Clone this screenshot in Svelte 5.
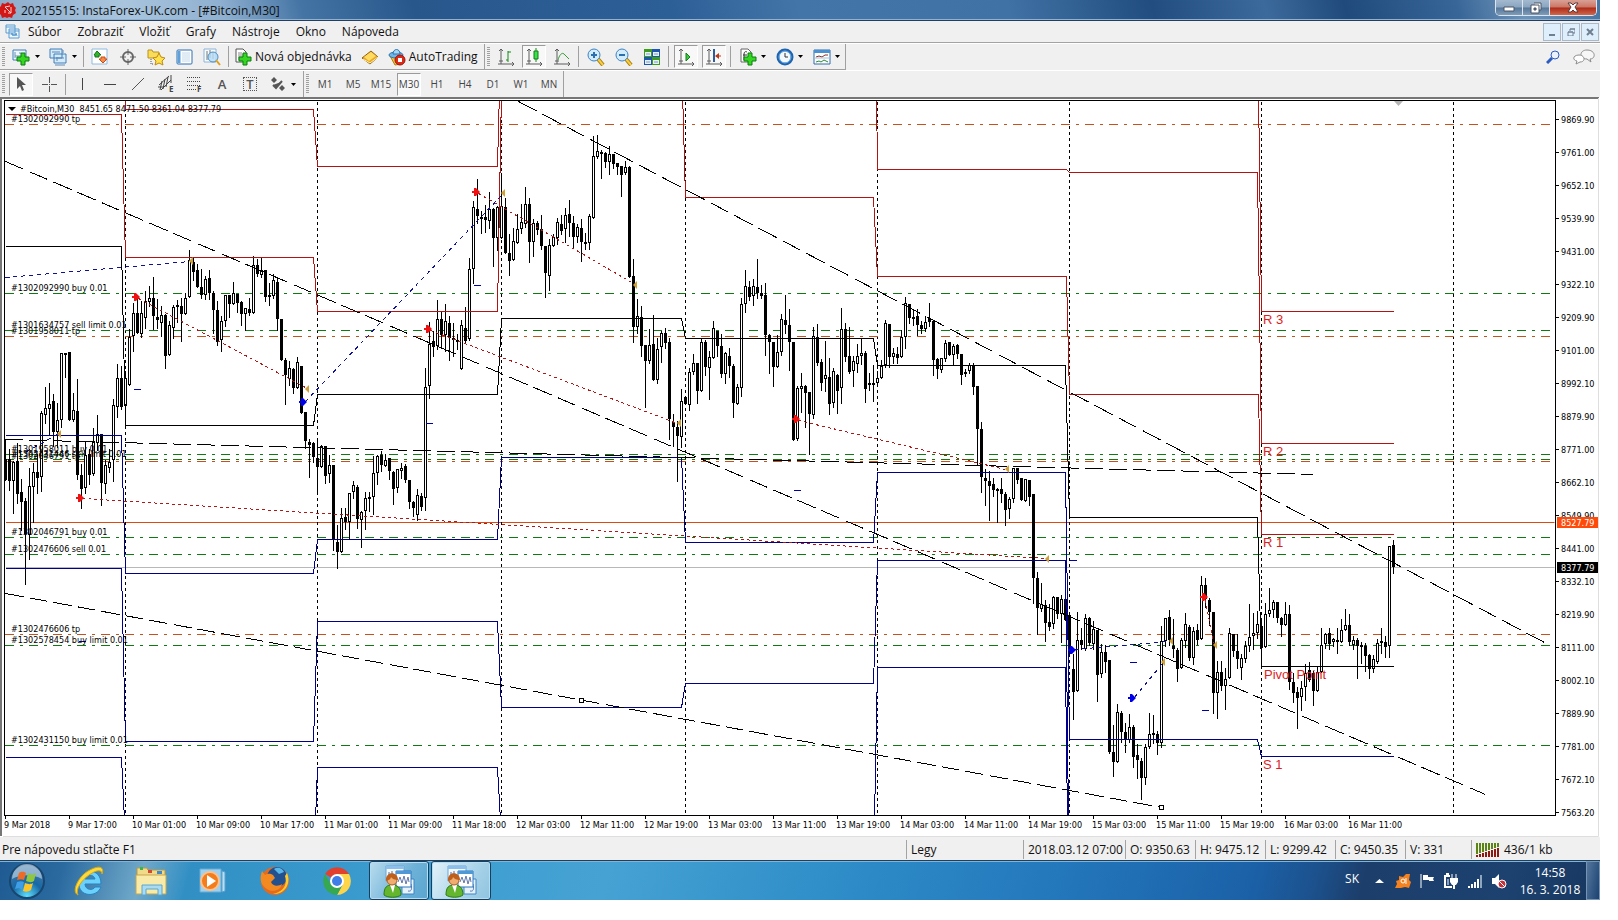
<script lang="ts">
  /**
   * Trading terminal window: title bar, menu, two toolbars, one candlestick
   * chart with pivots, orders and trend lines, the status bar and the
   * desktop taskbar below it.
   */

  const menu = ['Súbor', 'Zobraziť', 'Vložiť', 'Grafy', 'Nástroje', 'Okno', 'Nápoveda'];
  const periods = ['M1', 'M5', 'M15', 'M30', 'H1', 'H4', 'D1', 'W1', 'MN'];
  let period = $state('M30');

  // Chart space: one bar every 4 units, a price step every 33.
  const LEFT = 5;
  const RIGHT = 1555;
  const TOP = 100;
  const BOTTOM = 815;

  // Direction (u/d), then high, body top, body bottom, low.
  const bars = `
    d438,459,480,480 d448,459,481,490 u460,462,481,513 d442,461,494,503 d478,492,502,530 d497,501,534,584
    u467,486,535,559 u462,472,487,522 d453,472,478,493 u410,413,477,491 u386,408,415,423 u382,404,409,435
    d393,401,432,446 u402,420,432,447 u353,353,420,427 d353,353,353,377 d351,352,420,420 u392,410,420,421
    d378,411,475,479 d463,475,489,508 u440,455,488,493 d448,454,475,484 u427,442,474,475 u414,434,443,450
    d433,434,483,505 u459,465,484,493 u448,462,468,472 u398,405,460,481 u363,378,407,417 d365,378,407,409
    u370,378,406,417 u328,337,385,385 u302,313,336,351 d297,313,333,333 u300,313,334,337 u290,301,318,328
    u285,298,302,306 d276,298,316,329 d298,317,320,328 u305,315,323,336 d313,315,356,368 u320,325,355,355
    u304,307,328,338 u299,305,307,322 d297,306,314,341 u292,298,314,314 u249,260,297,297 d257,262,272,280
    d263,270,287,287 d268,287,295,298 u275,279,295,299 d269,278,293,299 d290,293,310,333 d300,310,342,345
    u315,321,340,351 u294,295,321,326 d294,295,304,317 u281,293,304,304 d293,294,303,312 d300,302,314,325
    u307,308,314,330 d297,309,313,315 u255,265,313,313 d258,265,274,276 u256,270,275,277 d270,270,297,301
    d282,295,297,305 u273,280,296,298 d277,282,319,330 d319,319,360,360 d357,360,375,404 u360,368,379,385
    d367,369,388,393 u356,362,388,388 d365,366,413,413 d412,412,441,448 d438,442,445,477 d441,443,457,462
    d440,458,467,493 u444,446,467,467 d446,446,476,483 u454,465,474,482 d464,465,540,550 d524,542,552,568
    u507,518,552,552 d507,517,522,529 u493,493,522,539 u480,485,492,498 d484,487,519,528 u510,512,520,547
    u491,498,511,529 d491,497,498,511 u455,473,497,514 u454,456,473,484 d450,455,465,471 u453,460,466,466
    d458,458,471,479 d470,472,489,504 u468,469,488,492 u462,468,471,478 d463,466,480,482 d479,480,502,508
    d500,502,508,516 u488,495,515,520 d492,496,507,510 u367,387,498,510 u321,344,386,398 d330,341,347,356
    u299,319,346,349 d310,319,335,347 u303,321,335,351 d315,323,338,360 d322,338,340,356 d333,340,341,349
    u319,325,369,369 d306,328,341,343 u257,269,339,340 u200,207,269,283 d178,209,216,223 d210,217,218,233
    d204,217,220,232 u191,209,221,228 d207,209,238,266 u205,207,238,250 u172,206,238,238 d197,207,253,253
    d233,253,261,275 u227,241,260,260 u213,229,243,243 u203,222,229,233 u186,204,224,227 d197,204,242,262
    u218,223,242,256 d220,223,230,234 d214,229,246,249 d245,246,273,297 u238,245,276,290 u233,237,246,246
    u217,222,238,244 d214,224,231,234 u207,215,229,242 d199,214,223,236 d215,223,237,247 u223,227,237,242
    d218,228,242,261 d232,242,243,249 u213,216,243,249 u135,156,218,218 u134,151,157,158 d149,152,153,178
    d151,153,162,167 u145,154,162,174 d153,154,164,168 d162,163,167,174 d165,166,175,196 u160,167,173,174
    d165,167,277,277 d258,276,327,342 u298,316,327,333 d305,317,346,356 d344,345,361,407 u328,345,361,363
    d314,344,380,380 u337,349,380,383 u330,333,347,362 d327,333,343,348 d337,342,419,439 d413,422,427,446
    d420,427,436,481 u388,401,437,447 d395,397,404,404 u367,372,405,410 u353,363,372,374 d362,363,391,403
    u337,342,391,391 d339,342,367,375 u350,357,368,399 u320,328,358,358 d330,331,346,356 d333,346,374,377
    u351,353,374,383 d347,356,366,377 d363,366,403,417 u383,387,404,404 u297,304,388,396 u269,286,304,312
    d280,287,297,300 u278,286,296,305 d258,287,293,298 d284,293,296,298 d282,295,335,355 d333,335,342,373
    d341,342,367,386 u334,352,367,367 u313,319,352,355 d294,320,325,333 d308,325,342,370 d342,342,440,440
    u385,388,439,440 u372,386,389,412 d384,386,393,427 d391,392,414,454 u326,336,415,418 d323,337,363,365
    d358,362,383,390 u340,375,379,391 d357,377,404,414 u367,371,403,407 d373,375,391,413 u307,329,388,403
    d322,329,357,361 d326,356,372,373 u355,361,371,386 u343,356,364,372 u338,353,356,364 d350,353,389,402
    u372,383,384,390 d364,383,384,401 u370,378,383,383 u359,366,378,378 u319,323,365,367 d323,324,357,367
    u347,353,357,363 d346,354,358,363 u329,337,357,357 u296,303,337,348 d303,304,318,323 u308,317,319,325
    d308,316,325,335 d320,325,329,333 u315,322,329,331 d302,318,322,326 d320,321,360,375 d357,359,369,378
    u357,358,370,372 u339,343,359,361 d341,342,355,355 u343,346,355,365 d343,345,354,358 d354,354,375,384
    d368,372,373,376 u362,365,371,373 d362,365,387,394 d385,386,429,465 d421,429,477,492 d468,478,481,505
    d470,481,486,520 d477,484,490,496 d487,489,490,522 d477,489,494,502 d491,494,510,525 u496,499,509,518
    u467,468,499,502 d467,468,480,483 d478,478,500,500 u479,479,501,501 d479,480,497,505 d493,494,578,603
    d571,578,608,634 u582,604,609,611 d599,605,623,641 d603,622,627,630 u595,597,624,628 d596,597,614,618
    u594,599,614,642 d598,599,620,620 d615,615,653,653 d653,669,692,719 u611,640,691,691 d627,640,645,649
    u613,618,649,650 d616,618,643,645 u620,629,644,649 d629,630,675,701 u643,652,674,677 d644,652,662,672
    d659,660,752,753 d724,752,762,776 u703,712,762,762 d710,713,732,742 d722,732,740,752 u713,727,740,742
    d724,727,757,767 d743,755,760,778 d757,761,778,799 u743,747,778,784 u712,734,747,748 d714,733,735,743
    d730,734,743,754 u625,641,743,747 u617,618,641,646 d609,617,640,645 d618,646,649,657 d647,650,669,681
    u637,640,668,668 u612,624,641,647 d624,627,658,660 u626,631,658,664 d623,630,640,644 u575,585,639,639
    d577,585,599,607 d597,600,612,625 d612,612,693,713 u660,672,693,718 d660,672,686,690 u667,679,686,709
    u627,633,678,678 d633,634,651,656 d633,651,659,668 u653,658,668,679 u640,646,659,662 u603,637,646,651
    u612,633,636,649 u610,624,633,638 d620,626,648,648 u602,614,647,647 u587,610,614,616 u599,602,610,617
    d601,602,618,622 d616,618,625,636 u601,614,625,625 d604,614,682,689 d672,682,693,702 d686,692,698,728
    u680,688,697,710 u663,673,687,700 d661,670,680,681 d670,673,691,705 u665,672,691,691 u627,645,672,672
    u632,634,644,648 d627,633,644,649 u637,639,642,646 d627,640,642,653 u618,630,642,642 u608,625,630,630
    d613,625,642,645 u635,640,645,649 d637,640,646,678 d641,645,646,663 d642,646,656,671 d653,655,669,678
    u654,659,669,672 u638,643,662,663 d627,641,643,653 d635,642,647,657 u545,546,646,657 d539,545,567,573`
    .trim()
    .split(/\s+/)
    .map((bar, i) => {
      const [high, top, bottom, low] = bar.slice(1).split(',').map(Number);
      return { x: LEFT + i * 4, up: bar[0] === 'u', high, top, bottom, low };
    });

  const dayBreaks = [125, 317, 501, 685, 877, 1069, 1261, 1453];

  const pivots = [
    { color: '#b51212', d: 'M5 114H121L125 257H313L317 311H497L501 90' },
    { color: '#b51212', d: 'M125 90V109H313L317 166H497L499 90' },
    { color: '#b51212', d: 'M682 90L685 197H873L877 276H1066L1069 394H1258L1261 534H1393' },
    { color: '#b51212', d: 'M876 90L877 169H1066L1069 172H1257L1261 443H1393' },
    { color: '#b51212', d: 'M1258 90L1261 311H1393' },
    { color: '#000', d: 'M5 246H121L125 425H313L317 394H497L501 318H681L685 338H873L877 365H1065L1069 517H1257L1261 666H1393' },
    { color: '#00008b', d: 'M5 435H121L125 573H313L317 539H497L501 457H681L685 542H873L877 472H1065L1069 739H1257L1261 756H1393' },
    { color: '#00008b', d: 'M5 568H121L125 741H313L317 621H497L501 707H681L685 683H873L877 560H1065L1068 820' },
    { color: '#00008b', d: 'M5 757H121L124 820M315 820L317 767H497L500 820M874 820L877 667H1065L1067 820' },
  ];

  const pivotLabels = [
    { text: 'R 3', x: 1263, y: 324 },
    { text: 'R 2', x: 1263, y: 456 },
    { text: 'R 1', x: 1263, y: 547 },
    { text: 'Pivot Point', x: 1264, y: 679 },
    { text: 'S 1', x: 1263, y: 769 },
  ];

  const orders = [
    { y: 124, tp: true, text: '#1302092990 tp' },
    { y: 293, tp: false, text: '#1302092990 buy 0.01' },
    { y: 330, tp: false, text: '#1301634757 sell limit 0.01' },
    { y: 336, tp: true, text: '#1301958011 tp' },
    { y: 454, tp: false, text: '#1301958011 buy 0.01' },
    { y: 459, tp: false, text: '#1302431446 sell limit 0.01' },
    { y: 461, tp: true, text: '#1302046791 tp' },
    { y: 537, tp: false, text: '#1302046791 buy 0.01' },
    { y: 554, tp: false, text: '#1302476606 sell 0.01' },
    { y: 634, tp: true, text: '#1302476606 tp' },
    { y: 645, tp: false, text: '#1302578454 buy limit 0.01' },
    { y: 745, tp: false, text: '#1302431150 buy limit 0.01' },
  ];

  // x1, y1, x2, y2
  const trends = [[5, 161, 1485, 794], [518, 101, 1544, 642], [5, 593, 1161, 807], [5, 439, 1313, 474]];

  const sells = ['M138 298L305 387', 'M82 498L1045 558', 'M430 330L677 423', 'M478 193L633 283', 'M798 420L1005 469', 'M1205 600L1213 643'];
  const buys = ['M5 277L189 261', 'M305 401L500 196', 'M1074 649L1169 641', 'M1134 697L1162 663', 'M26 451L57 434'];

  const sellMarks = [[135, 297], [79, 498], [427, 329], [475, 192], [795, 419], [1203, 597]];
  const buyMarks = [[302, 402], [1071, 650], [1131, 698]];
  const closeMarks = [[191, 261], [307, 389], [59, 434], [503, 193], [635, 285], [679, 423], [1007, 469], [1047, 559], [1171, 641], [1163, 662], [1215, 645]];
  const stops = [[133, 389], [473, 285], [425, 423], [793, 490], [1129, 662], [1201, 710], [1069, 560], [78, 641]];

  const prices = [
    '9869.90', '9761.00', '9652.10', '9539.90', '9431.00', '9322.10', '9209.90', '9101.00', '8992.10', '8879.90', '8771.00',
    '8662.10', '8549.90', '8441.00', '8332.10', '8219.90', '8111.00', '8002.10', '7889.90', '7781.00', '7672.10', '7563.20',
  ];
  const times = [
    '9 Mar 2018', '9 Mar 17:00', '10 Mar 01:00', '10 Mar 09:00', '10 Mar 17:00', '11 Mar 01:00', '11 Mar 09:00', '11 Mar 18:00',
    '12 Mar 03:00', '12 Mar 11:00', '12 Mar 19:00', '13 Mar 03:00', '13 Mar 11:00', '13 Mar 19:00', '14 Mar 03:00', '14 Mar 11:00',
    '14 Mar 19:00', '15 Mar 03:00', '15 Mar 11:00', '15 Mar 19:00', '16 Mar 03:00', '16 Mar 11:00',
  ];
</script>

{#snippet axes()}
  <path d="M4 1v15H1M4 16h13M2 3l2-2 2 2M15 14l2 2-2 2M2 13h4" fill="none" stroke="#5c5c5c" />
{/snippet}

{#snippet plus(x: number, y: number)}
  <path transform="translate({x} {y})" d="M4 0h4v4h4v4H8v4H4V8H0V4h4z" fill="#35d61f" stroke="#0b7d12" />
{/snippet}

{#snippet caret()}
  <svg class="caret" viewBox="0 0 5 3" aria-hidden="true"><path d="M0 0h5L2.500 3z" /></svg>
{/snippet}

{#snippet orderIcon()}
  <svg width="34" height="34" viewBox="0 0 34 34" aria-hidden="true">
    <path d="M4 2h18v15H4z" fill="#f4faff" stroke="#6ba6d8" /><path d="M4 2h18v3H4z" fill="#8cc0ea" />
    <path d="M7 8v7M10 7v6M19 7v4" stroke="#556ea0" />
    <path d="M20 15h12v15H20z" fill="#e6f2fc" stroke="#3b86c8" /><path d="M26 27c4 1 4-3 3-7" fill="none" stroke="#6178ad" />
    <path d="M14 7h15v16H14z" fill="#fff" stroke="#2c77bd" /><path d="M14 7h15v3H14z" fill="#4f98d8" />
    <path d="M16 18l2-5 2 6 2-7 2 8 2-7 1 5" fill="none" stroke="#6178ad" />
    <path d="M2 31c0-8 3-10 8-10s9 2 9 10c-4 3-13 3-17 0z" fill="#64b62e" stroke="#2e7a12" />
    <path d="M8 21l3 8 2-8z" fill="#fff" />
    <circle cx="10" cy="16" r="5" fill="#f0ad72" stroke="#b4601f" />
    <path d="M4 17c-1-10 12-10 12-1-3 0-6-1-7-3 0 2-2 3-5 4z" fill="#bf5f1c" />
  </svg>
{/snippet}

<div class="desktop">
  <header class="title">
    <svg width="16" height="16" viewBox="0 0 16 16" aria-hidden="true">
      <path d="M8 0l2 2 3-1 1 3 2 2-1 2 1 3-3 2-1 3-3-1-2 1-2-1-3 1-1-3-2-2 1-3-1-2 2-2 1-3 3 1z" fill="#d31717" />
      <path d="M5 5l6 6M11 5v6H8M5 8v3M5 5l5-1" fill="none" stroke="#f9d3cf" />
    </svg>
    <span>20215515: InstaForex-UK.com - [#Bitcoin,M30]</span>
    <div class="window-controls">
      <button type="button" class="win" aria-label="Minimize"><svg width="12" height="10" viewBox="0 0 12 10"><path d="M1 4h10v4H1z" fill="#fff" stroke="#4b5566" /></svg></button>
      <button type="button" class="win" aria-label="Restore"><svg width="12" height="12" viewBox="0 0 12 12"><path d="M4 1h7v7H9M1 3h8v8H1z" fill="#fff" stroke="#4b5566" /><path d="M4 6h2v2H4z" fill="#5d7797" stroke="#4b5566" /></svg></button>
      <button type="button" class="win close" aria-label="Close"><svg width="12" height="11" viewBox="0 0 12 11"><path d="M1 1h3l2 2 2-2h3L8 5l3 5H8L6 8l-2 2H1l3-5z" fill="#fff" stroke="#5b3a3a" /></svg></button>
    </div>
  </header>

  <nav class="menu">
    <svg width="15" height="15" viewBox="0 0 15 15" aria-hidden="true">
      <path d="M1 1h9v8H1zM4 5h10v9H4z" fill="#eef6fd" stroke="#5a9bd0" /><path d="M1 3h9M4 7h10M6 11l1-2 1 3 1-2 1 2 1-3 1 3" fill="none" stroke="#5a9bd0" />
    </svg>
    {#each menu as item (item)}
      <a href="#{item}">{item}</a>
    {/each}
    <div class="mdi">
      <button type="button" aria-label="Minimize chart"><svg width="8" height="8" viewBox="0 0 8 8"><path d="M1 6h6v2H1z" fill="#6f7f92" /></svg></button>
      <button type="button" aria-label="Restore chart"><svg width="8" height="8" viewBox="0 0 8 8"><path d="M3 3V1h5v4H6M1 4h5v4H1zM1 4h5M3 1h5" fill="none" stroke="#6f7f92" /></svg></button>
      <button type="button" aria-label="Close chart"><svg width="8" height="8" viewBox="0 0 8 8"><path d="M1 1l6 6M7 1L1 7" stroke="#6f7f92" stroke-width="2" /></svg></button>
    </div>
  </nav>

  <div class="row">
    <div class="toolbar first">
      <span class="grip"></span>
      <button type="button" class="tool drop" aria-label="New chart">
        <svg width="18" height="18" viewBox="0 0 18 18"><path d="M1 2h13v10H1z" fill="#eef7ff" stroke="#3f7fb8" /><path d="M3 4v6M3 8h8M8 4v2" stroke="#6c8fb0" />{@render plus(5, 5)}</svg>
        {@render caret()}
      </button>
      <button type="button" class="tool drop" aria-label="Profiles">
        <svg width="18" height="18" viewBox="0 0 18 18"><path d="M1 1h12v9H1zM5 6h12v9H5z" fill="#d5eafa" stroke="#3f7fb8" /><path d="M3 4h8M8 9v4M7 10h8M6 17h10M14 2v3" stroke="#5d8ab5" /></svg>
        {@render caret()}
      </button>
      <i class="sep"></i>
      <button type="button" class="tool" aria-label="Market watch">
        <svg width="18" height="18" viewBox="0 0 18 18"><path d="M1 1h15v15H1z" fill="#fff" stroke="#8fbbe0" /><path d="M6 3l4 4H8v2H4V7H3z" fill="#2eb52b" stroke="#157318" /><path d="M12 15l-4-4h2V9h4v2h2z" fill="#f98b48" stroke="#c94c12" /></svg>
      </button>
      <button type="button" class="tool" aria-label="Data window">
        <svg width="16" height="16" viewBox="0 0 16 16"><circle cx="8" cy="8" r="5" fill="none" stroke="#666" stroke-width="2" /><path d="M8 0v6M8 10v6M0 8h6M10 8h6" stroke="#666" /></svg>
      </button>
      <button type="button" class="tool" aria-label="Navigator">
        <svg width="19" height="18" viewBox="0 0 19 18"><path d="M1 10V2h4l1 2h6v6z" fill="#f9dc5b" stroke="#bd9117" /><path d="M4 11v5h3" fill="none" stroke="#555" stroke-dasharray="1 1" /><path d="M12 5l2 4 4 1-3 3 1 4-4-2-4 2 1-4-3-3 4-1z" fill="#ffe14b" stroke="#bd8a12" /></svg>
      </button>
      <button type="button" class="tool" aria-label="Terminal">
        <svg width="17" height="16" viewBox="0 0 17 16"><rect x="1" y="1" width="15" height="14" rx="1" fill="#fff" stroke="#2c6fb1" /><path d="M3 2v12" stroke="#5fa0db" stroke-width="3" /><path d="M6 4h8M6 6h8M6 8h8M6 10h8M6 12h8" stroke="#c3d8ea" /></svg>
      </button>
      <button type="button" class="tool" aria-label="Strategy tester">
        <svg width="18" height="18" viewBox="0 0 18 18"><path d="M1 1h12v13H1z" fill="#f7fbff" stroke="#8cb4d8" /><path d="M4 3v9M7 2v8M10 4v7" stroke="#777" /><circle cx="10" cy="9" r="5" fill="#b7dcf5" fill-opacity=".8" stroke="#4d8ec4" /><path d="M13 12l4 5" stroke="#dca11e" stroke-width="2" /></svg>
      </button>
      <i class="sep"></i>
      <button type="button" class="tool text">
        <svg width="17" height="18" viewBox="0 0 17 18"><path d="M1 1h7l3 3v10H1z" fill="#fff" stroke="#555" /><path d="M3 5h4M3 7h6M3 9h5M3 11h3" stroke="#888" />{@render plus(4, 5)}</svg>
        Nová objednávka
      </button>
      <button type="button" class="tool" aria-label="MetaEditor">
        <svg width="18" height="16" viewBox="0 0 18 16"><path d="M1 9l9-7 7 6-8 7z" fill="#e9a921" stroke="#94600b" /><path d="M3 8l7-5 5 4-7 5z" fill="#ffdb62" /><path d="M2 10l7 4 8-6" fill="none" stroke="#fff1b5" /></svg>
      </button>
      <button type="button" class="tool text">
        <svg width="18" height="18" viewBox="0 0 18 18"><path d="M2 8l5 9 6-1 2-8z" fill="#f3c53b" stroke="#ab7d15" /><ellipse cx="8" cy="7" rx="7" ry="3" fill="#6fb6e6" stroke="#2c75ae" /><path d="M5 6c0-6 7-6 7 0z" fill="#a4d7f5" stroke="#2c75ae" /><circle cx="12" cy="12" r="5" fill="#db2a16" stroke="#9c1408" /><path d="M10 10h4v4h-4z" fill="#fff" /></svg>
        AutoTrading
      </button>
    </div>
    <div class="toolbar second">
      <span class="grip"></span>
      <button type="button" class="tool" aria-label="Bar chart">
        <svg width="18" height="18" viewBox="0 0 18 18">{@render axes()}<path d="M11 3v11M9 12h2M11 4h3" stroke="#168a17" fill="none" /></svg>
      </button>
      <button type="button" class="tool on" aria-label="Candlesticks">
        <svg width="18" height="18" viewBox="0 0 18 18">{@render axes()}<path d="M11 0v14" stroke="#168a17" /><path d="M9 3h4v8H9z" fill="#3be04a" stroke="#0f7d18" /></svg>
      </button>
      <button type="button" class="tool" aria-label="Line chart">
        <svg width="18" height="18" viewBox="0 0 18 18">{@render axes()}<path d="M5 12c2-7 5-8 7-5l4 4" stroke="#3a9b3a" fill="none" /></svg>
      </button>
      <i class="sep"></i>
      {#each ['in', 'out'] as zoom (zoom)}
        <button type="button" class="tool" aria-label="Zoom {zoom}">
          <svg width="18" height="18" viewBox="0 0 18 18"><path d="M11 11l5 6" stroke="#a87b0e" stroke-width="4" /><path d="M11 11l5 6" stroke="#f7cf3e" stroke-width="2" /><circle cx="7" cy="7" r="6" fill="#d3ecfb" stroke="#3c83c4" /><path d={zoom === 'in' ? 'M4 7h6M7 4v6' : 'M4 7h6'} stroke="#2b6fb0" stroke-width="2" /></svg>
        </button>
      {/each}
      <button type="button" class="tool" aria-label="Tile windows">
        <svg width="18" height="18" viewBox="0 0 18 18"><path d="M1 1h8v8H1zM9 9h8v8H9z" fill="#3f9c20" /><path d="M9 1h8v8H9zM1 9h8v8H1z" fill="#1c56ad" /><path d="M2 4h6v4H2zM10 4h6v4h-6zM2 12h6v4H2zM10 12h6v4h-6z" fill="#e7f1fb" /><path d="M3 6h4M11 6h4M3 14h4M11 14h4" stroke="#7b9cc0" /></svg>
      </button>
      <i class="sep"></i>
      <button type="button" class="tool on" aria-label="Auto scroll">
        <svg width="18" height="18" viewBox="0 0 18 18">{@render axes()}<path d="M9 5l4 4-4 4z" fill="#3cc743" stroke="#13801a" /></svg>
      </button>
      <button type="button" class="tool on" aria-label="Chart shift">
        <svg width="18" height="18" viewBox="0 0 18 18">{@render axes()}<path d="M9 1v13" stroke="#2c5ca0" stroke-width="2" /><path d="M11 8h5" stroke="#b93a16" /><path d="M14 5l-4 3 4 3z" fill="#b93a16" /></svg>
      </button>
      <i class="sep"></i>
      <button type="button" class="tool drop" aria-label="Indicators">
        <svg width="18" height="18" viewBox="0 0 18 18"><path d="M2 1h7l3 3v10H2z" fill="#fff" stroke="#666" /><path d="M8 4c-2-1-3 0-3 3v5M4 7h4" fill="none" stroke="#333" />{@render plus(5, 5)}</svg>
        {@render caret()}
      </button>
      <button type="button" class="tool drop" aria-label="Periods">
        <svg width="18" height="18" viewBox="0 0 18 18"><circle cx="9" cy="9" r="7" fill="#f2f9ff" stroke="#1f62ad" stroke-width="3" /><circle cx="9" cy="9" r="6" fill="none" stroke="#73b5ec" /><path d="M9 5v4h3" fill="none" stroke="#333" /></svg>
        {@render caret()}
      </button>
      <button type="button" class="tool drop" aria-label="Templates">
        <svg width="18" height="18" viewBox="0 0 18 18"><path d="M1 2h16v14H1z" fill="#fff" stroke="#2d6cab" /><path d="M1 2h16v3H1z" fill="#4b90d0" /><path d="M3 9l3-1 3 1 3-2h3" fill="none" stroke="#8e2e22" /><path d="M1 10h16" stroke="#9fc0dd" /><path d="M3 14l3-1 2 1 3-2 4 2" fill="none" stroke="#268c36" /></svg>
        {@render caret()}
      </button>
    </div>
    <div class="corner">
      <button type="button" class="tool" aria-label="Search">
        <svg width="14" height="14" viewBox="0 0 14 14"><path d="M6 8l-5 5" stroke="#2c5bc4" stroke-width="3" /><circle cx="9" cy="5" r="4" fill="#eaf2ff" stroke="#2c5bc4" /></svg>
      </button>
      <button type="button" class="tool" aria-label="Messages">
        <svg width="22" height="16" viewBox="0 0 22 16"><path d="M14 1c9 0 9 9 3 9l1 3-4-3c-8 0-8-9 0-9z" fill="#f7f7f7" stroke="#8d8d8d" /><path d="M6 6c6 0 7 7 1 7l-4 2 1-3C-1 11 0 6 6 6z" fill="#fff" stroke="#8d8d8d" /></svg>
      </button>
    </div>
  </div>

  <div class="row lines">
    <div class="toolbar draw">
      <span class="grip"></span>
      <button type="button" class="tool on" aria-label="Cursor">
        <svg width="10" height="15" viewBox="0 0 10 15"><path d="M1 0v12l3-3 2 5 2-1-2-5h4z" fill="#555" /></svg>
      </button>
      <button type="button" class="tool" aria-label="Crosshair">
        <svg width="17" height="17" viewBox="0 0 17 17"><path d="M8.500 1v6M8.500 10v6M1 8.500h6M10 8.500h6M8 8.500h1" stroke="#555" /></svg>
      </button>
      <i class="sep"></i>
      <button type="button" class="tool" aria-label="Vertical line"><svg width="14" height="14" viewBox="0 0 14 14"><path d="M7.500 1v12" stroke="#444" /></svg></button>
      <button type="button" class="tool" aria-label="Horizontal line"><svg width="14" height="14" viewBox="0 0 14 14"><path d="M1 7.500h12" stroke="#444" /></svg></button>
      <button type="button" class="tool" aria-label="Trend line"><svg width="14" height="14" viewBox="0 0 14 14"><path d="M1 13L13 1" stroke="#555" /></svg></button>
      <button type="button" class="tool" aria-label="Channel">
        <svg width="17" height="18" viewBox="0 0 17 18"><path d="M1 10L11 1M3 15L13 5M4 6l-2 9M7 4L5 14M10 2L8 12M13 0v8M0 12h6" fill="none" stroke="#444" /><text class="mark" x="11" y="17">E</text></svg>
      </button>
      <button type="button" class="tool" aria-label="Fibonacci">
        <svg width="17" height="18" viewBox="0 0 17 18"><path d="M1 2.500h14M1 6.500h14M1 10.500h14M1 14.500h9" stroke="#444" stroke-dasharray="1 1" /><text class="mark" x="11" y="17">F</text></svg>
      </button>
      <button type="button" class="tool glyph">A</button>
      <button type="button" class="tool glyph boxed">T</button>
      <button type="button" class="tool drop" aria-label="Arrows">
        <svg width="16" height="16" viewBox="0 0 16 16"><path d="M4 1l3 3-3 3-3-3zM12 9l3 3-3 3-3-3zM3 9l3 3 5-6" fill="#555" /><path d="M3 9l3 3 6-7" fill="none" stroke="#555" stroke-width="2" /></svg>
        {@render caret()}
      </button>
    </div>
    <div class="toolbar times">
      <span class="grip"></span>
      {#each periods as p (p)}
        <button type="button" class="tool period" class:on={p === period} onclick={() => (period = p)}>{p}</button>
      {/each}
    </div>
  </div>

  <main class="chart">
    <svg viewBox="0 97 1600 740" role="img" aria-label="Bitcoin, 30 minute chart">
      <defs>
        <clipPath id="plot"><rect x={LEFT - 1} y={TOP} width={RIGHT - LEFT} height={BOTTOM - TOP} /></clipPath>
      </defs>
      <path class="edge" d="M0 98H1599M1 97V836" />
      <path d="M3 836.500H1598.500V98" fill="none" stroke="#dedede" />

      <g transform="translate(.5 .5)" clip-path="url(#plot)" class="crisp">
        <path d="M5 567H1555" stroke="#b8b8b8" />
        <path d="M5 522H1555" stroke="#dc4a12" />
        {#each dayBreaks as x (x)}
          <path d="M{x} 101V814" stroke="#000" stroke-dasharray="3 3" />
        {/each}
        {#each orders as order (order.y)}
          <path d="M4.500 {order.y}H1551" stroke={order.tp ? '#c4521c' : '#0f7a12'} stroke-dasharray="9 6 3 6" />
        {/each}
        {#each bars as bar (bar.x)}
          <path d="M{bar.x} {bar.high}V{bar.low}" stroke="#000" />
          <rect x={bar.x - 1} y={bar.top} width="2" height={Math.max(bar.bottom - bar.top - 1, 1)} fill={bar.up ? '#fff' : '#000'} stroke="#000" />
        {/each}
        {#each pivots as pivot (pivot.d)}
          <path d={pivot.d} fill="none" stroke={pivot.color} />
        {/each}
        <!-- pathLength keeps the dash period constant along the time axis -->
        {#each trends as [x1, y1, x2, y2] (y1)}
          <line {x1} {y1} {x2} {y2} pathLength={x2 - x1} stroke="#000" stroke-dasharray="18 6" />
        {/each}
        {#each sells as d (d)}
          <path {d} stroke="#b01818" stroke-dasharray="3 3" />
        {/each}
        {#each buys as d (d)}
          <path {d} stroke="#101094" stroke-dasharray="4 4" />
        {/each}
        {#each stops as [x, y] (x)}
          <path d="M{x} {y}h7" stroke="#0000a8" />
        {/each}
        <path d="M579 698h4v4h-4zM1159 805h4v4h-4z" fill="#fff" stroke="#000" />
      </g>
      <g>
        {#each sellMarks as [x, y] (x)}
          <path d="M{x - 3} {y - 1}h2v-3h2l4 4-4 4h-2v-3h-2z" fill="#f01010" />
        {/each}
        {#each buyMarks as [x, y] (x)}
          <path d="M{x - 3} {y - 1}h2v-3h2l4 4-4 4h-2v-3h-2z" fill="#0000e8" />
        {/each}
        {#each closeMarks as [x, y] (x)}
          <path d="M{x - 2} {y}l4-4v8z" fill="#cf9f38" />
        {/each}
      </g>
      <path d="M1394 101h9l-4.500 5z" fill="#b5b5b5" />

      <path class="crisp" d="M4.500 815.500V100.500H1555.500V815.500z" fill="none" stroke="#000" />

      {#each orders as order (order.y)}
        <text x="11" y={order.y - 2}>{order.text}</text>
      {/each}
      <path d="M8 107h8l-4 4z" />
      <text x="20" y="112">#Bitcoin,M30&nbsp; 8451.65 8471.50 8361.04 8377.79</text>
      {#each pivotLabels as label (label.text)}
        <text class="pivot" x={label.x} y={label.y}>{label.text}</text>
      {/each}

      {#each prices as price, i (price)}
        <path class="crisp" d="M1556 {119.5 + i * 33}h3" stroke="#000" />
        <text x="1561" y={123 + i * 33}>{price}</text>
      {/each}
      <path d="M1557 517h41v11h-41z" fill="#ff4a0a" />
      <text class="tag" x="1561" y="526">8527.79</text>
      <path d="M1557 562h41v11h-41z" />
      <text class="tag" x="1561" y="571">8377.79</text>

      {#each times as time, i (time)}
        <path class="crisp" d="M{5.5 + i * 64} 816v3" stroke="#000" />
        <text x={4 + i * 64} y="828">{time}</text>
      {/each}
    </svg>
  </main>

  <footer class="status">
    <span class="hint">Pre nápovedu stlačte F1</span>
    <span class="profile">Legy</span>
    <span class="date">2018.03.12 07:00</span>
    <span class="value">O: 9350.63</span>
    <span class="value">H: 9475.12</span>
    <span class="value">L: 9299.42</span>
    <span class="value">C: 9450.35</span>
    <span class="volume">V: 331</span>
    <span class="traffic">
      <svg width="24" height="14" viewBox="0 0 24 14" aria-hidden="true">
        {#each Array(8) as _, i (i)}
          <path d="M{i * 3} 0h2v{11 - i}h-2z" fill="#5c8314" />
          <path d="M{i * 3} {12 - i}h2V14h-2z" fill="#8c1a10" />
        {/each}
      </svg>
      436/1 kb
    </span>
  </footer>

  <div class="taskbar">
    <button type="button" class="start" aria-label="Start">
      <svg width="38" height="38" viewBox="0 0 38 38">
        <defs>
          <radialGradient id="orb" cx=".5" cy=".95" r=".9"><stop offset="0" stop-color="#5fe0ff" /><stop offset=".5" stop-color="#1768a5" /><stop offset="1" stop-color="#4b7ca8" /></radialGradient>
        </defs>
        <circle cx="19" cy="19" r="17" fill="url(#orb)" stroke="#19466e" stroke-width="2" />
        <path d="M4 17a15 15 0 0 1 30 0c-9-5-21-5-30 0z" fill="#d7e6f2" fill-opacity=".55" />
        <path d="M11 11c3-2 5-1 7 0l-2 7c-2-1-4-1-7 0z" fill="#ef6a25" /><path d="M20 11c3 2 5 2 8 0l-2 8c-3 2-5 1-8 0z" fill="#8fc73e" />
        <path d="M9 20c3-1 5-1 7 0l-2 8c-2-2-4-2-7-1z" fill="#3f9ee6" /><path d="M17 21c3 1 5 2 8 0l-2 7c-3 2-5 2-8 1z" fill="#fcc52a" />
      </svg>
    </button>
    <button type="button" class="app" aria-label="Internet Explorer">
      <svg width="32" height="32" viewBox="0 0 32 32"><path d="M28 19H12c0 6 8 7 10 3h6c-4 11-23 10-22-4S28 1 28 19zM12 14h10c-1-5-9-5-10 0z" fill="#6bd0fa" stroke="#2583c4" /><path d="M5 30c-7-3 0-18 10-24S32 1 29 9c0-5-6-4-13 1S2 24 5 30z" fill="#ffd83a" stroke="#d6a813" /></svg>
    </button>
    <button type="button" class="app" aria-label="Explorer">
      <svg width="34" height="32" viewBox="0 0 34 32"><path d="M3 3h10l1 2h17v10H3z" fill="#f1da8a" stroke="#b99a44" /><path d="M6 2h3v3H6z" fill="#39b54a" /><path d="M14 5h4v3h-4z" fill="#d8472c" /><path d="M23 6h5v3h-5z" fill="#3d8ad0" /><path d="M2 10h30v19H2z" fill="#f8eba9" stroke="#c5a54c" /><path d="M8 20h20v10h-4v-6H12v6H8z" fill="#a9dbf2" stroke="#5aa6cf" /></svg>
    </button>
    <button type="button" class="app" aria-label="Media Player">
      <svg width="30" height="28" viewBox="0 0 30 28"><path d="M24 4l3 1v19l-3 1z" fill="#b8def4" stroke="#5aa1cc" /><path d="M2 2h21v23H2z" fill="#9fd0ee" stroke="#66abd6" /><circle cx="12" cy="14" r="9" fill="#f57c1b" stroke="#fbc18b" stroke-width="2" /><path d="M9 8l9 6-9 6z" fill="#fff" /></svg>
    </button>
    <button type="button" class="app" aria-label="Firefox">
      <svg width="32" height="32" viewBox="0 0 32 32"><circle cx="16" cy="16" r="14" fill="#e66a1c" /><circle cx="18" cy="12" r="10" fill="#23508f" /><path d="M15 4c4-3 9 0 10 3l-5 2-2-2z" fill="#58b7e8" /><path d="M28 8c5 12-4 22-14 21 9-2 15-8 12-18z" fill="#ffcb2b" /><path d="M3 6l3 4c3-2 6-1 8 0l2 3-4 4c2 5 8 4 11 2-1 6-9 9-15 5S0 15 3 6z" fill="#f28a21" /></svg>
    </button>
    <button type="button" class="app" aria-label="Chrome">
      <svg width="30" height="30" viewBox="0 0 30 30"><path d="M15 15L3 8a14 14 0 0 1 24 0z" fill="#e2402f" /><path d="M15 15V8h12a14 14 0 0 1-12 21l6-11z" fill="#fdd54a" /><path d="M15 15l6 3-6 11A14 14 0 0 1 3 8l6 10z" fill="#36a852" /><circle cx="15" cy="15" r="7" fill="#fff" /><circle cx="15" cy="15" r="5" fill="#3f7de8" /></svg>
    </button>
    <button type="button" class="app open" aria-label="Trading terminal">{@render orderIcon()}</button>
    <button type="button" class="app open front" aria-label="Trading terminal, chart">{@render orderIcon()}</button>
    <div class="tray">
      <span class="lang">SK</span>
      <svg width="9" height="5" viewBox="0 0 9 5" aria-hidden="true"><path d="M0 5l4.500-4L9 5z" fill="#fff" /></svg>
      <svg width="16" height="16" viewBox="0 0 16 16" aria-hidden="true"><path d="M4 3l4 1 3-3 4 0-1 6 2 2-2 6-4-1-4 1-6 0 2-4-1-3 3-1z" fill="#f5811f" /><circle cx="8" cy="8" r="2" fill="none" stroke="#fff" /><path d="M11 5v6" stroke="#fff" /></svg>
      <svg width="16" height="16" viewBox="0 0 16 16" aria-hidden="true"><path d="M2 1v14" stroke="#fff" /><path d="M4 2h5v2h6l-1 2 1 2h-5V7H4z" fill="#fff" /></svg>
      <svg width="16" height="16" viewBox="0 0 16 16" aria-hidden="true"><path d="M7 3H2v11h7M3 1h3" fill="none" stroke="#fff" stroke-width="2" /><path d="M5 6v6M9 1v4M13 1v4" stroke="#fff" /><path d="M7 5h8v4l-2 3h-4L7 9zM10 12h2v4h-2z" fill="#fff" /></svg>
      <svg width="16" height="14" viewBox="0 0 16 14" aria-hidden="true"><path d="M1 12h2v2H1zM4 10h2v4H4zM7 8h2v6H7zM10 5h2v9h-2z" fill="#fff" /><path d="M13 1h2v13h-2z" fill="#8fa6bf" /></svg>
      <svg width="16" height="16" viewBox="0 0 16 16" aria-hidden="true"><path d="M1 5h3l4-4v14l-4-4H1z" fill="#fff" /><circle cx="11" cy="11" r="4" fill="#c8313a" stroke="#fff" /><path d="M8 8l6 6" stroke="#fff" /></svg>
      <time class="clock">14:58<br />16. 3. 2018</time>
    </div>
    <button type="button" class="show-desktop" aria-label="Show desktop"></button>
  </div>
</div>

<style>
  :global(body) {
    margin: 0;
    background: #fff;
  }

  .desktop {
    margin-right: 18px;
    font-family: 'Open Sans', 'Noto Sans', sans-serif;
    font-size: 12px;
    color: #111;
  }

  button {
    padding: 0;
    border: 0;
    background: none;
    font: inherit;
    color: inherit;
    display: flex;
    align-items: center;
    justify-content: center;
  }

  svg {
    display: block;
    flex: none;
  }

  .title {
    height: 21px;
    box-sizing: border-box;
    display: flex;
    align-items: center;
    gap: 5px;
    overflow: hidden;
    border-bottom: 1px solid #243e5e;
    box-shadow: inset 0 -1px #8fb2d3;
    white-space: nowrap;
    background: linear-gradient(75deg, #8caccb 0, #a9c5de 8%, #8fb0d0 14%, #4474a4 19%, #28578c 26%, #2d5f97 42%, #4475a8 50%, #4172a5 63%, #214d80 72%, #3d6a9c 79%, #1f4a7b 84%, #386698 91%, #6e93b8 95%, #4874a2 100%);
  }

  .window-controls {
    margin: 0 3px 4px auto;
    align-self: stretch;
    display: flex;
    border: 1px solid #dbe6f0;
    border-top: 0;
    border-radius: 0 0 5px 5px;
    overflow: hidden;
  }

  .win {
    width: 27px;
    background: linear-gradient(#a3b9cf, #8ba5c0 48%, #567799 52%, #7f9cb9);
    border-right: 1px solid #dbe6f0;
  }

  .win.close {
    width: 46px;
    border: 0;
    background: linear-gradient(#d9a195, #cb7565 48%, #ad2b16 52%, #d0674e);
  }

  .menu {
    height: 21px;
    display: flex;
    align-items: center;
    gap: 16px;
    padding: 0 1px 0 5px;
    background: #f0f0f0;
    border-bottom: 1px solid #a3a3a3;
  }

  .menu > svg {
    margin-right: -8px;
  }

  .menu a {
    color: inherit;
    text-decoration: none;
  }

  .mdi {
    margin-left: auto;
    display: flex;
    gap: 1px;
  }

  .mdi button {
    width: 18px;
    height: 18px;
    box-sizing: border-box;
    border: 1px solid #a7b9ca;
    background: #dfeefb;
  }

  .row {
    height: 27px;
    display: flex;
    background: #f0f0f0;
    border-top: 1px solid #fff;
    box-sizing: border-box;
  }

  .toolbar {
    display: flex;
    align-items: center;
    gap: 4px;
    box-sizing: border-box;
    border-right: 1px solid #a0a0a0;
    border-bottom: 1px solid #a0a0a0;
    padding-left: 2px;
  }

  .lines .toolbar {
    border-bottom: 0;
  }

  .first {
    width: 485px;
  }

  .second {
    width: 361px;
  }

  .second .sep {
    margin-right: 1px;
  }

  .draw {
    width: 304px;
  }

  .times {
    width: 260px;
  }

  .grip {
    width: 3px;
    height: 20px;
    flex: none;
    background: repeating-linear-gradient(#a0a0a0 0 1px, #f0f0f0 1px 2px);
  }

  .sep {
    width: 1px;
    height: 21px;
    flex: none;
    background: #a0a0a0;
  }

  .tool {
    width: 24px;
    height: 23px;
    box-sizing: border-box;
    flex: none;
    white-space: nowrap;
  }

  .tool.drop {
    width: 33px;
    gap: 5px;
  }

  .second .tool.drop {
    gap: 4px;
  }

  .tool.text {
    width: auto;
    gap: 3px;
    padding: 0 2px;
  }

  .tool.on {
    border: 1px solid;
    border-color: #9b9b9b #fff #fff #9b9b9b;
    background: #f8f8f8;
  }

  .tool.period {
    font-size: 10px;
    color: #444;
  }

  .tool.glyph {
    font-size: 13px;
    font-weight: 600;
    color: #555;
  }

  .tool.boxed {
    width: 14px;
    height: 14px;
    margin: 0 5px;
    border: 1px dotted #555;
  }

  .mark {
    font-size: 8px;
    font-weight: 700;
    fill: #444;
  }

  .caret {
    width: 5px;
    height: 3px;
  }

  .corner {
    margin-left: auto;
    display: flex;
    align-items: center;
    gap: 7px;
    padding-right: 4px;
  }

  .chart {
    background: #fff;
  }

  .chart svg {
    width: 100%;
    height: auto;
  }

  .chart text {
    font-family: 'DejaVu Sans Condensed', 'DejaVu Sans', sans-serif;
    font-size: 9px;
  }

  .chart text.pivot {
    font-family: 'Liberation Sans', Arial, sans-serif;
    font-size: 13px;
    fill: #dc1e1e;
  }

  .chart text.tag {
    fill: #fff;
  }

  .crisp {
    shape-rendering: crispEdges;
  }

  .edge {
    stroke: #767676;
    stroke-width: 2;
    fill: none;
  }

  .status {
    height: 23px;
    box-sizing: border-box;
    padding-top: 2px;
    display: flex;
    align-items: center;
    background: #f0f0f0;
    white-space: nowrap;
  }

  .status span {
    height: 19px;
    box-sizing: border-box;
    display: flex;
    align-items: center;
    padding-left: 4px;
    border-left: 1px solid #a3a3a3;
  }

  .status .hint {
    flex: 1;
    padding-left: 2px;
    border: 0;
  }

  .status .profile {
    width: 117px;
  }

  .status .date {
    width: 102px;
  }

  .status .value {
    width: 70px;
  }

  .status .volume {
    width: 66px;
  }

  .status .traffic {
    width: 129px;
    gap: 4px;
  }

  .taskbar {
    height: 40px;
    box-sizing: border-box;
    display: flex;
    align-items: stretch;
    border-top: 1px solid #1c4060;
    box-shadow: inset 0 1px #83b4d6;
    background: linear-gradient(105deg, #1f5b92 0, #2a6a9f 4%, #6fa8c9 9%, #318fc4 12%, #3c9dd0 25%, #46a2d3 38%, #2f8dc8 52%, #2479bd 65%, #1b61a8 78%, #1c518d 82%, #1c3e6b 85%, #1d4270 94%, #17375f 100%);
  }

  .start {
    width: 54px;
    margin-right: 5px;
  }

  .app {
    width: 60px;
    margin-right: 2px;
  }

  .app.open {
    box-sizing: border-box;
    border: 1px solid #173f60;
    border-radius: 3px;
    box-shadow: inset 0 0 0 1px #b5dcf0;
    background: linear-gradient(120deg, #b9dcee, #6db1d7 60%, #5aa5d0);
  }

  .app.open.front {
    background: linear-gradient(120deg, #e4f2f9, #a9d3e9 60%, #8fc4e0);
  }

  .tray {
    margin-left: auto;
    display: flex;
    align-items: center;
    gap: 8px;
    color: #fff;
  }

  .lang {
    margin: 0 8px 4px 0;
  }

  .tray svg:first-of-type {
    margin-right: 3px;
  }

  .clock {
    width: 70px;
    text-align: center;
    line-height: 17px;
  }

  .show-desktop {
    width: 14px;
    margin-left: 1px;
    border: 1px solid #7794b3;
    background: linear-gradient(100deg, #53779d, #1d4271);
  }
</style>
